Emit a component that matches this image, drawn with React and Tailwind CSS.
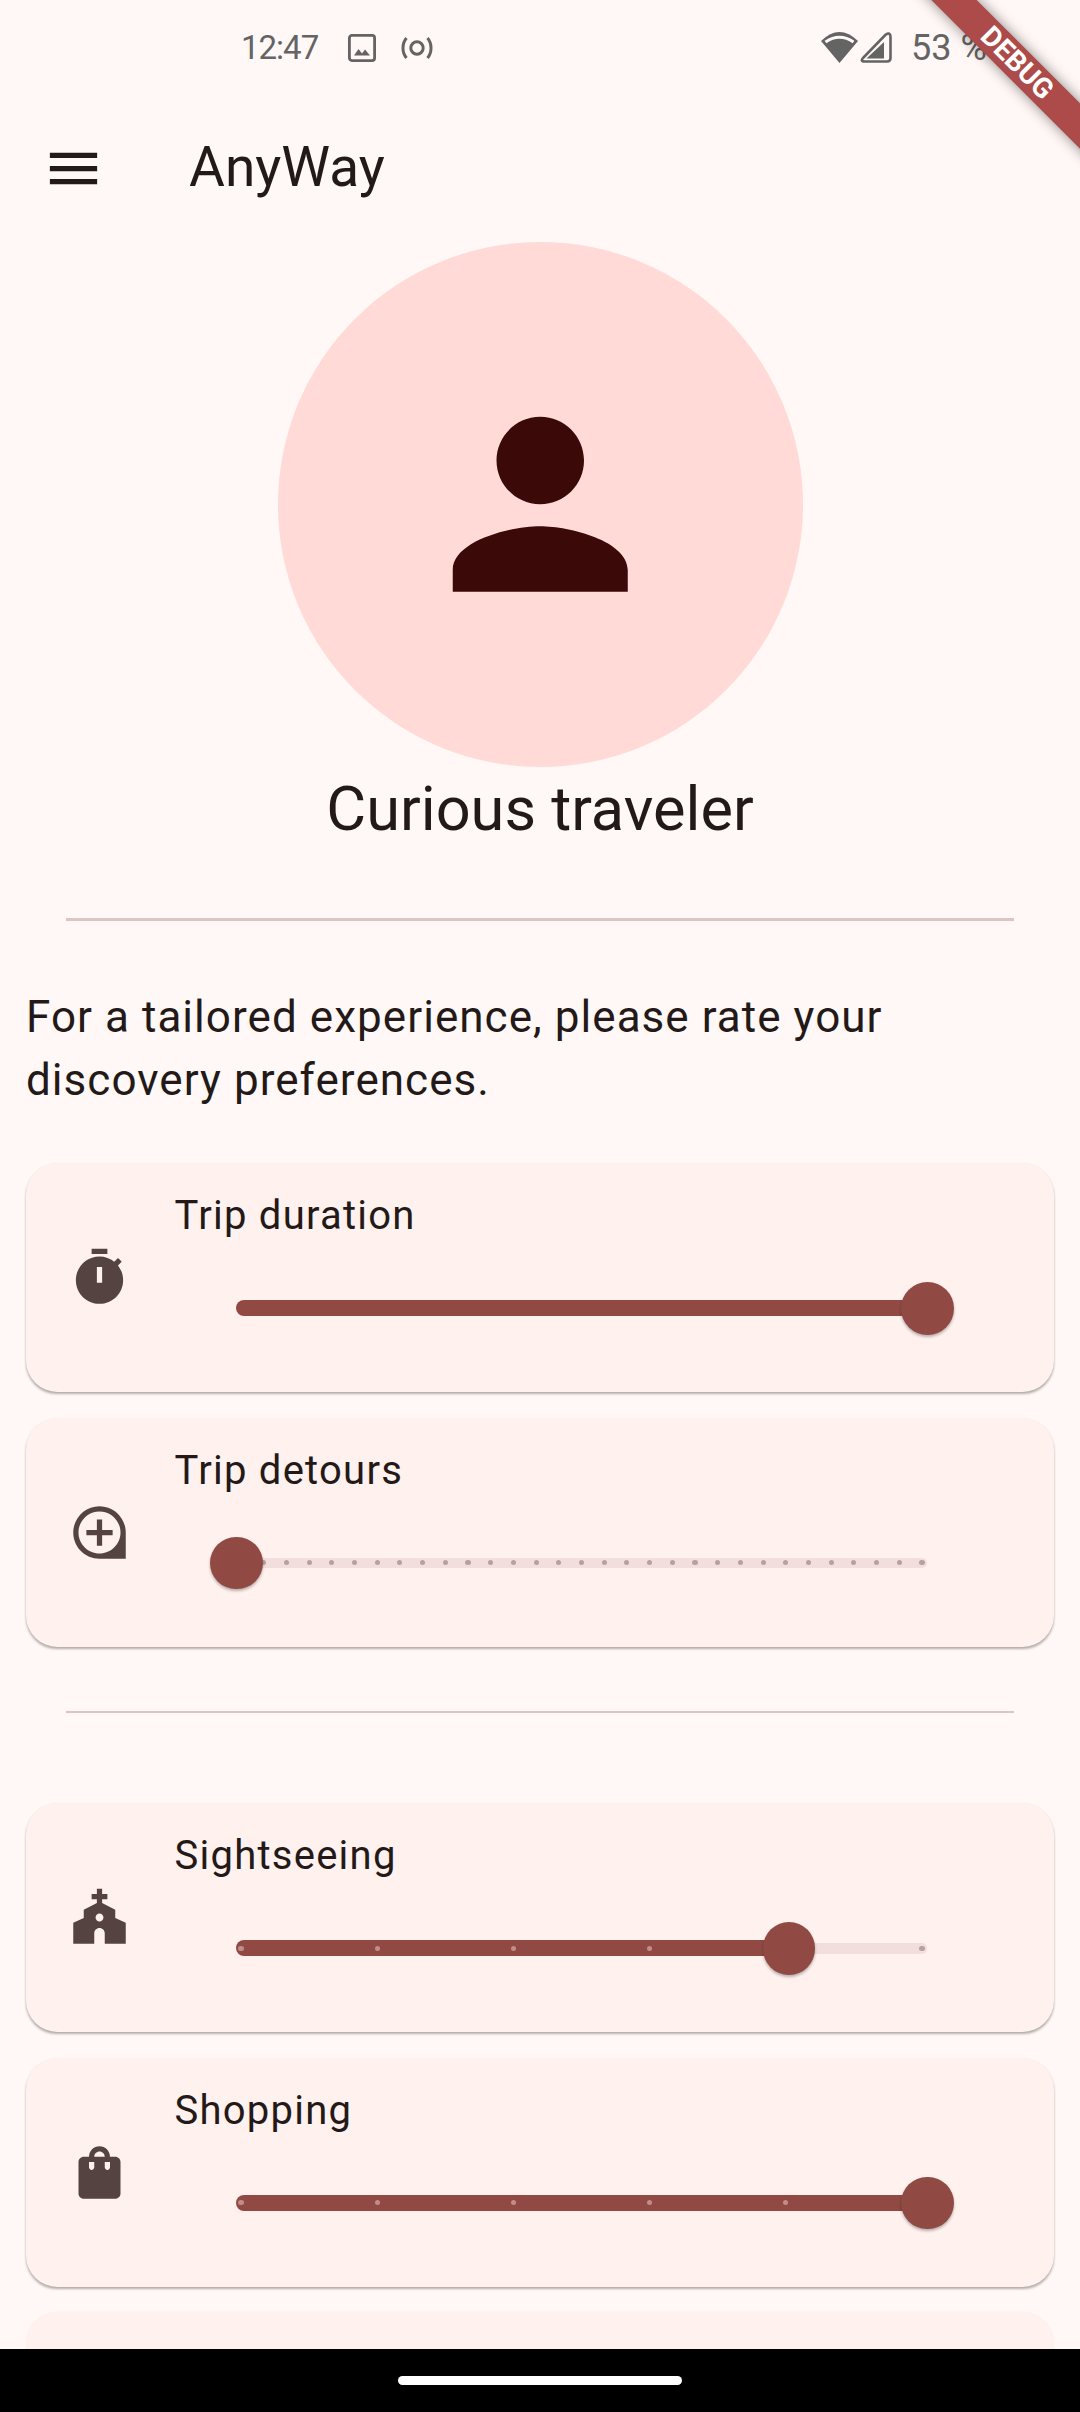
const PATHS = {
  timer: "M9 1h6v2H9zm10.03 6.39 1.42-1.42c-.43-.51-.9-.99-1.41-1.41l-1.42 1.42C16.07 4.74 14.12 4 12 4c-4.97 0-9 4.03-9 9s4.02 9 9 9 9-4.03 9-9c0-2.12-.74-4.07-1.97-5.61zM13 14h-2V8h2v6z",
  loupe: "M13 7h-2v4H7v2h4v4h2v-4h4v-2h-4V7zm-1-5C6.49 2 2 6.49 2 12s4.49 10 10 10h10V12c0-5.51-4.49-10-10-10zm0 18c-4.41 0-8-3.59-8-8s3.59-8 8-8 8 3.59 8 8-3.59 8-8 8z",
  church: "M18 12.22V9l-5-2.5V5h2V3h-2V1h-2v2H9v2h2v1.5L6 9v3.22L2 14v8h8v-4c0-1.1.9-2 2-2s2 .9 2 2v4h8v-8l-4-1.78zm-6 1.28c-.83 0-1.5-.67-1.5-1.5s.67-1.5 1.5-1.5 1.5.67 1.5 1.5-.67 1.5-1.5 1.5z",
  bag: "M18 6h-2c0-2.21-1.79-4-4-4S8 3.79 8 6H6c-1.1 0-2 .9-2 2v12c0 1.1.9 2 2 2h12c1.1 0 2-.9 2-2V8c0-1.1-.9-2-2-2zm-8 4c0 .55-.45 1-1 1s-1-.45-1-1V8h2v2zm2-6c1.1 0 2 .9 2 2h-4c0-1.1.9-2 2-2zm4 6c0 .55-.45 1-1 1s-1-.45-1-1V8h2v2z",
};

function Slider({ value, divisions }) {
  const W = 691;
  const pos = value * W;
  const dots = [];
  if (divisions) {
    for (let i = 0; i <= divisions; i++) dots.push(5 + (i * 681) / divisions);
  }
  return (
    <div className="relative ml-[61.5px] w-[691px] h-[124px]">
      <div
        className="absolute top-[56px] h-[10.5px] right-0 rounded-r-[5px] bg-[#f2dedc]"
        style={{ left: pos }}
      />
      <div
        className="absolute top-[53px] h-[16px] left-0 rounded-l-[8px] bg-[#904a43]"
        style={{ width: pos }}
      />
      {dots.map((x, i) => (
        <div
          key={i}
          className={
            "absolute top-[58.5px] w-[5.2px] h-[5.2px] -ml-[2.6px] rounded-full " +
            (x < pos ? "bg-[#c08d88]" : "bg-[#b9a09e]")
          }
          style={{ left: x }}
        />
      ))}
      <div
        className="absolute top-[35px] w-[52.5px] h-[52.5px] -ml-[26px] rounded-full bg-[#904a43] shadow-[0_2px_3px_rgba(0,0,0,0.28)]"
        style={{ left: pos }}
      />
    </div>
  );
}

function PrefCard({ icon, title, value, divisions }) {
  return (
    <div className="flex h-[229px] rounded-[31.5px] bg-[#fff1ee] pl-[42px] items-start shadow-[0_2.5px_2.5px_-0.5px_rgba(0,0,0,0.3),0_0_1.5px_rgba(0,0,0,0.06)]">
      <svg viewBox="0 0 24 24" className="w-[63px] h-[63px] mt-[83px] shrink-0" fill="#554341">
        <path d={PATHS[icon]} />
      </svg>
      <div className="ml-[43.500px] pt-[21px] flex-1">
        <div className="text-[40px] leading-[63px] tracking-[1.25px] text-[#231918]">{title}</div>
        <Slider value={value} divisions={divisions} />
      </div>
    </div>
  );
}

function Rule() {
  return <div className="mx-[66px] h-[2.6px] bg-[#dcc6c3]" />;
}

export default function App() {
  return (
    <div
      className="relative w-[1080px] h-[2412px] overflow-hidden flex flex-col bg-[#fff8f6]"
      style={{ fontFamily: "Roboto, sans-serif" }}
    >
      <div className="h-[95px] shrink-0 flex items-center justify-between pl-[241px] pr-[93px] text-[#646464] leading-none">
        <div className="flex items-center">
          <span className="text-[33px] tracking-[-1px] w-[76px]">12:47</span>
          <svg viewBox="0 0 28 28" className="w-[28px] h-[28px] ml-[31px]">
            <rect x="1.4" y="1.4" width="25.2" height="25.2" rx="2.5" fill="none" stroke="#646464" strokeWidth="2.8" />
            <path d="M6 21.5 10.5 15l3.5 4.5 3-4 5 6z" fill="#646464" />
          </svg>
          <svg viewBox="0 0 32 24" className="w-[32px] h-[24px] ml-[25px]">
            <circle cx="16" cy="12" r="6.2" fill="none" stroke="#646464" strokeWidth="3" />
            <path d="M5.5 2C.8 7.5.8 16.5 5.5 22M26.500 2c4.700 5.500 4.700 14.500 0 20" fill="none" stroke="#646464" strokeWidth="3" />
          </svg>
        </div>
        <div className="flex items-center">
          <svg viewBox="0 0 37 31" className="w-[37px] h-[31px]">
            <path d="M18.500 31 0 9Q18.500-9 37 9Z" fill="#646464" />
            <path d="M4.500 10Q18.500 .5 32.500 10" fill="none" stroke="#fff8f6" strokeWidth="3" />
          </svg>
          <svg viewBox="0 0 32 31" className="w-[32px] h-[31px] ml-[2px]">
            <path d="M25.500 2.800Q30.500-.5 30.500 5V26Q30.500 29.500 27 29.500H5Q-.5 29.500 3.500 25.500Z" fill="none" stroke="#646464" strokeWidth="2.6" />
            <path d="M6.500 26.500 24 10V26.500Z" fill="#646464" />
          </svg>
          <span className="ml-[19px] w-[76px] whitespace-nowrap text-[36px]">53 %</span>
        </div>
      </div>

      <div className="h-[147px] shrink-0 flex items-center pl-[42px]">
        <svg viewBox="0 0 24 24" className="w-[63px] h-[63px]" fill="#231918">
          <path d="M3 18h18v-2H3v2zm0-5h18v-2H3v2zm0-7v2h18V6H3z" />
        </svg>
        <span className="ml-[84px] -mt-[4px] text-[55px] leading-[70px] text-[#231918]">AnyWay</span>
      </div>

      <div className="flex-1 min-h-0 overflow-hidden">
        <div className="flex flex-col items-center">
          <div className="w-[525px] h-[525px] rounded-full bg-[#ffdad6] flex items-center justify-center">
            <svg viewBox="0 0 24 24" className="w-[262.5px] h-[262.5px]" fill="#3b0907">
              <path d="M12 12c2.210 0 4-1.790 4-4s-1.790-4-4-4-4 1.790-4 4 1.790 4 4 4zm0 2c-2.670 0-8 1.340-8 4v2h16v-2c0-2.660-5.330-4-8-4z" />
            </svg>
          </div>
          <div className="text-[61.300px] leading-[84px] text-[#231918]">Curious traveler</div>
        </div>

        <div className="mt-[67px]">
          <Rule />
        </div>

        <p className="mt-[65.500px] mb-[51px] mx-[26px] text-[44px] leading-[63px] tracking-[1.05px] text-[#231918]">
          For a tailored experience, please rate your discovery preferences.
        </p>

        <div className="mx-[26px] flex flex-col gap-[25.5px]">
          <PrefCard icon="timer" title="Trip duration" value={1} />
          <PrefCard icon="loupe" title="Trip detours" value={0} divisions={30} />
        </div>

        <div className="mt-[64px]">
          <Rule />
        </div>

        <div className="mt-[90px] mx-[26px] flex flex-col gap-[25.5px]">
          <PrefCard icon="church" title="Sightseeing" value={0.8} divisions={5} />
          <PrefCard icon="bag" title="Shopping" value={1} divisions={5} />
          <div className="h-[229px] rounded-[31.5px] bg-[#fff1ee] shadow-[0_0_1.5px_rgba(0,0,0,0.06)]" />
        </div>
      </div>

      <div className="h-[63px] shrink-0 bg-black flex items-center justify-center">
        <div className="w-[284px] h-[9px] rounded-full bg-white" />
      </div>

      <div className="absolute top-[47px] left-[867px] w-[300px] h-[32px] rotate-45 bg-[#ad4a4a] shadow-[0_0_14px_rgba(0,0,0,0.45)] flex items-center justify-center">
        <span className="text-white font-bold text-[28px] leading-none">DEBUG</span>
      </div>
    </div>
  );
}
